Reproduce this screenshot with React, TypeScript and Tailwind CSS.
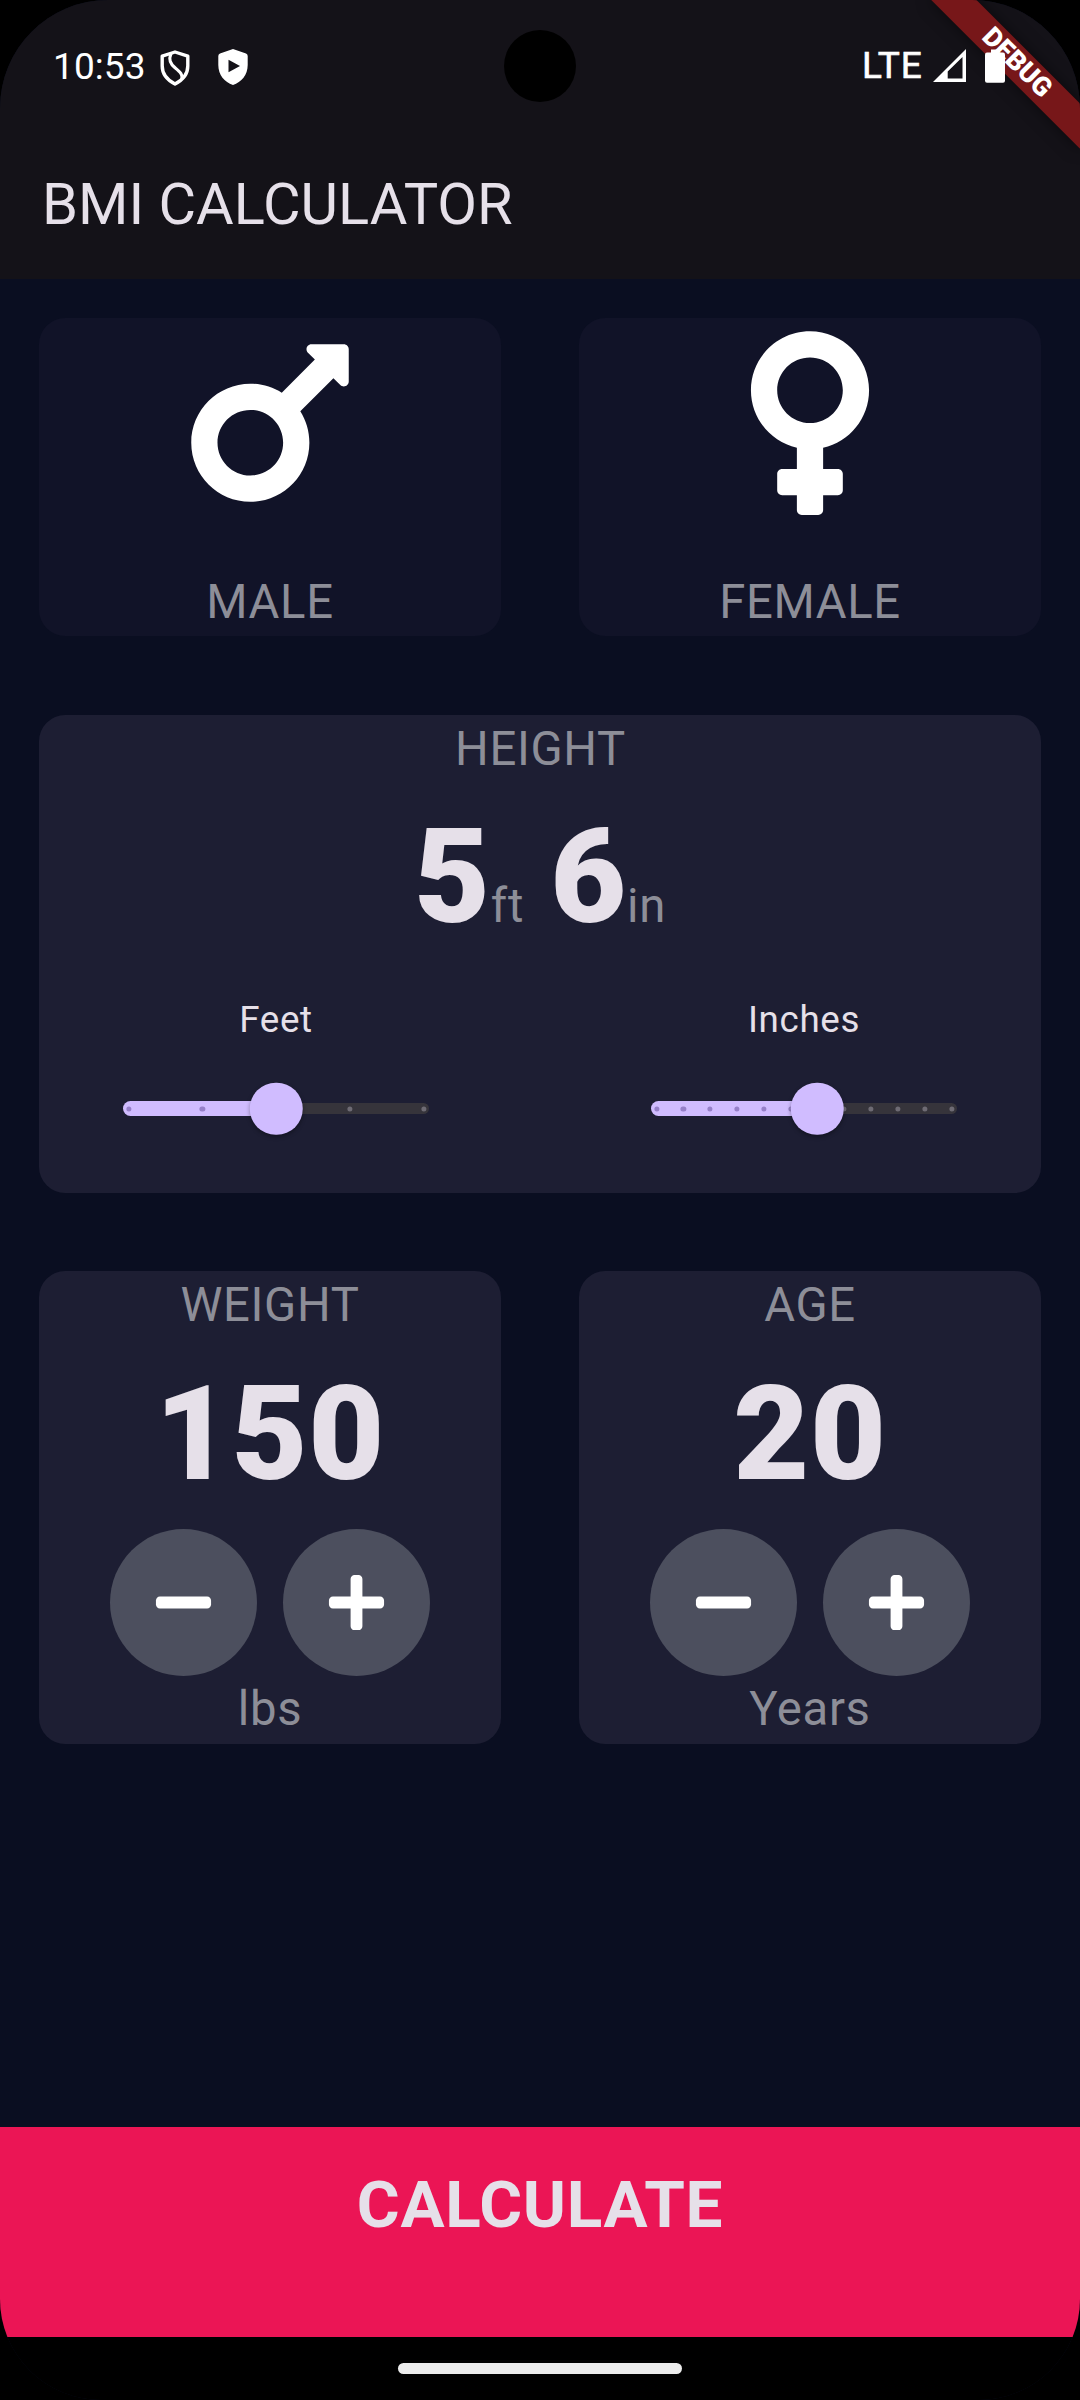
import React from "react";
import { FaMars, FaVenus, FaMinus, FaPlus } from "react-icons/fa";

const LABEL = "text-[47.25px] leading-[68.25px] tracking-[0.66px] text-[#8d8e98]";
const NUMBER = "text-[131.25px] leading-[189px] font-black tracking-[0.66px] text-[#e6e0e9]";

function StatusBar() {
  return (
    <div className="flex h-[132px] items-start justify-between text-white">
      <div className="flex items-start pl-[53px] pt-[43px]">
        <span className="w-[107px] pt-px text-[37px] leading-[46px] tracking-[0.1px]">10:53</span>
        <svg className="mt-[7px] h-[36px] w-[30px]" viewBox="0 0 30 36" fill="none" stroke="#fff">
          <path d="M15 2 27.800 6.200V16c0 8-5 14-12.800 18C7.200 30 2.200 24 2.200 16V6.200Z" strokeWidth="3.400" strokeLinejoin="round" />
          <path d="M11 3.500C8.500 9.500 9.800 13.500 15.300 18c4.700 4 7.700 6.500 6.700 11" strokeWidth="3.200" />
        </svg>
        <svg className="ml-[28px] mt-[6px] h-[36px] w-[30px]" viewBox="0 0 30 36" fill="#fff">
          <path fillRule="evenodd" d="M15 0 28 4.600Q29.700 5.300 29.700 7V16C29.700 26 23.500 33 15 36 6.500 33 .3 26 .3 16V7Q.3 5.300 2 4.600ZM10.500 10.700V23.300L22 17Z" />
        </svg>
      </div>
      <div className="flex items-start pr-[114px] pt-[43px]">
        <span className="w-[71px] text-[37px] leading-[46px] tracking-[0.9px] [-webkit-text-stroke:0.6px_white]">LTE</span>
        <svg className="mt-[6px] h-[33px] w-[33px]" viewBox="0 0 33 33" fill="#fff">
          <path fillRule="evenodd" d="M0 33 33 0V33ZM14.700 22.500V29.500H29.500V8Z" />
        </svg>
      </div>
    </div>
  );
}

/* Diagonal ribbon across the top right corner */
function DebugBanner() {
  return (
    <div className="pointer-events-none absolute right-0 top-0 h-[220px] w-[220px] overflow-hidden">
      <div className="absolute left-[51.900px] top-[47.400px] flex h-[31.500px] w-[210px] rotate-45 items-center justify-center bg-[#771719] text-[26.800px] font-black leading-none text-white shadow-[0_0_16px_rgba(0,0,0,0.5)]">
        DEBUG
      </div>
    </div>
  );
}

function Battery() {
  return (
    <svg className="absolute left-[985px] top-[49px] h-[34px] w-[20px]" viewBox="0 0 20 34" fill="#fff">
      <rect x="6" y="0.500" width="8" height="6" />
      <rect y="3.500" width="20" height="30.200" rx="2" />
    </svg>
  );
}

function GenderCard({ icon, label }: { icon: React.ReactNode; label: string }) {
  return (
    <div className="flex flex-1 flex-col items-center gap-[39.375px] rounded-[26.250px] bg-[#111328]">
      {icon}
      <span className={LABEL}>{label}</span>
    </div>
  );
}

function Slider({ label, steps, value }: { label: string; steps: number; value: number }) {
  const pct = (value / steps) * 100;
  return (
    <div className="flex w-[473.250px] flex-col items-center">
      <span className="pt-px text-[36.750px] leading-[52.500px] tracking-[0.66px] text-[#e6e0e9]">{label}</span>
      <div className="-mt-px flex h-[126px] w-[305.500px] items-center">
        <div className="relative h-[10.500px] w-full rounded-full bg-[#36343b] px-[5.250px]">
          <div className="absolute -top-[2.625px] left-0 h-[15.750px] rounded-l-full bg-[#d0bcff]" style={{ width: `${pct}%` }} />
          <div className="relative h-full">
            {Array.from({ length: steps + 1 }, (_, i) => (
              <span
                key={i}
                className={
                  "absolute top-1/2 h-[5.250px] w-[5.250px] -translate-x-1/2 -translate-y-1/2 rounded-full " +
                  (i <= value ? "bg-[#9680c9]" : "bg-[#6e6b74]")
                }
                style={{ left: `${(i / steps) * 100}%` }}
              />
            ))}
            <span
              className="absolute top-1/2 h-[52.500px] w-[52.500px] -translate-x-1/2 -translate-y-1/2 rounded-full bg-[#d0bcff] shadow-[0_2px_4px_rgba(0,0,0,0.35)]"
              style={{ left: `${pct}%` }}
            />
          </div>
        </div>
      </div>
    </div>
  );
}

function RoundButton({ children }: { children: React.ReactNode }) {
  return (
    <button className="flex h-[147px] w-[147px] items-center justify-center rounded-full bg-[#4c4f5e] text-white">
      {children}
    </button>
  );
}

function CounterCard({ label, value, unit }: { label: string; value: number; unit: string }) {
  return (
    <div className="flex h-[472.500px] flex-1 flex-col items-center rounded-[26.250px] bg-[#1d1e33]">
      <span className={LABEL}>{label}</span>
      <span className={NUMBER}>{value}</span>
      <div className="flex gap-[26.250px]">
        <RoundButton>
          <FaMinus className="h-[63px] w-[63px]" />
        </RoundButton>
        <RoundButton>
          <FaPlus className="h-[63px] w-[63px]" />
        </RoundButton>
      </div>
      <span className={LABEL + " -mt-px"}>{unit}</span>
    </div>
  );
}

export default function App() {
  return (
    <div className="h-[2400px] w-[1080px] bg-black font-['Roboto',sans-serif]">
      <div className="relative flex h-full w-full flex-col overflow-hidden rounded-b-[101px] rounded-t-[108px] bg-[#0a0e21]">
        <header className="h-[279px] bg-[#141218]">
          <StatusBar />
          <h1 className="pl-[42px] pt-[36px] text-[57.750px] font-normal leading-[73.500px] text-[#e6e0e9]">BMI CALCULATOR</h1>
        </header>

        <main className="flex flex-1 flex-col gap-[78.750px] px-[39.375px] pt-[39.375px]">
          <section className="flex gap-[78.750px]">
            <GenderCard icon={<FaMars className="h-[210px] w-[210px] text-white" />} label="MALE" />
            <GenderCard icon={<FaVenus className="h-[210px] w-[210px] text-white" />} label="FEMALE" />
          </section>

          <section className="flex h-[477.750px] flex-col items-center rounded-[26.250px] bg-[#1d1e33]">
            <span className={LABEL + " pl-px"}>HEIGHT</span>
            <div className="flex h-[189px] items-baseline">
              <span className={NUMBER}>5</span>
              <span className={LABEL}>ft</span>
              <span className={NUMBER + " ml-[26.250px]"}>6</span>
              <span className={LABEL}>in</span>
            </div>
            <div className="flex w-full justify-between pt-[21px]">
              <Slider label="Feet" steps={4} value={2} />
              <Slider label="Inches" steps={11} value={6} />
            </div>
          </section>

          <section className="flex gap-[78.750px]">
            <CounterCard label="WEIGHT" value={150} unit="lbs" />
            <CounterCard label="AGE" value={20} unit="Years" />
          </section>
        </main>

        <button className="flex h-[210px] items-start justify-center bg-[#eb1555] pt-[31px] text-[65.625px] font-bold leading-[94.500px] tracking-[0.66px] text-[#e6e0e9]">
          CALCULATE
        </button>
        <nav className="flex h-[63px] justify-center bg-black pt-[26px]">
          <div className="h-[11px] w-[284px] rounded-full bg-[#ececec]" />
        </nav>

        <div className="absolute left-[503.500px] top-[29.500px] h-[72.500px] w-[72.500px] rounded-full bg-black" />
        <DebugBanner />
        <Battery />
      </div>
    </div>
  );
}
